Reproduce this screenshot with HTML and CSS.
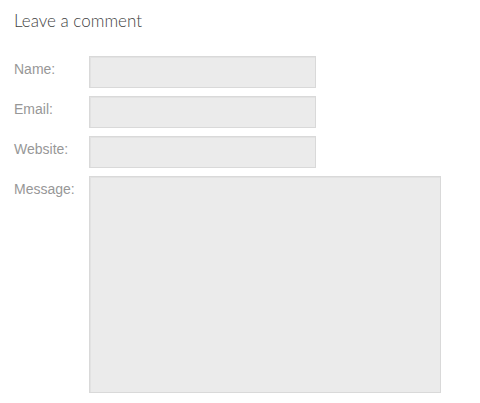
FILE: index.html
```html
<!DOCTYPE html>
<html>
<head>
<meta charset="utf-8">
<link rel="stylesheet" href="styles.css">
</head>
<body>
<div class="page">
  <h2 class="title">Leave a comment</h2>
  <form class="form">
    <label class="label" for="name">Name:</label>
    <input class="field" id="name" type="text">
    <label class="label" for="email">Email:</label>
    <input class="field" id="email" type="text">
    <label class="label" for="website">Website:</label>
    <input class="field" id="website" type="text">
    <label class="label" for="message">Message:</label>
    <textarea class="field area" id="message"></textarea>
  </form>
</div>
</body>
</html>
```
FILE: styles.css
```css
html, body {
  margin: 0;
  padding: 0;
  background: #ffffff;
}
.page {
  padding: 10px 0 0 14px;
}
.title {
  margin: 0 0 24px 0;
  font-family: "Lato", sans-serif;
  font-weight: 300;
  font-size: 17px;
  line-height: 22px;
  color: #3f3f3f;
}
.form {
  display: grid;
  grid-template-columns: 75px auto;
  row-gap: 8px;
  justify-content: start;
  align-items: start;
}
.label {
  font-family: "Liberation Sans", Arial, sans-serif;
  font-size: 14px;
  line-height: 16px;
  color: #979797;
  padding-top: 5px;
}
.field {
  box-sizing: border-box;
  width: 227px;
  height: 32px;
  margin: 0;
  padding: 0;
  background: #ebebeb;
  border: 1px solid #d9d9d9;
  box-shadow: inset 1px 1px 0 #e2e2e2;
  outline: none;
  resize: none;
  display: block;
}
.area {
  width: 352px;
  height: 217px;
}
```
